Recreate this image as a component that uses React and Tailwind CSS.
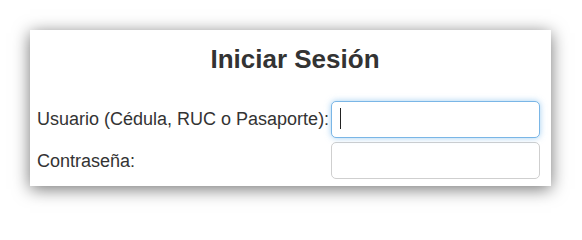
import { useState } from 'react';

export default function App() {
    const [usuario, setUsuario] = useState('');
    const [clave, setClave] = useState('');

    return (
        <div className="w-[582px] h-[218px] bg-white pt-[30px] pl-[30px] font-['Liberation_Sans',Arial,sans-serif] text-[#333]">
            <div className="w-[521px] h-[156px] bg-white shadow-[0_3px_16px_rgba(0,0,0,0.55)] pt-[14px]">
                {/* Title */}
                <h2 className="text-center text-[26px] leading-[30px] font-bold pl-[9px]">Iniciar Sesión</h2>

                {/* Form */}
                <div className="mt-[27px] pl-[7px] grid grid-cols-[294px_209px] gap-y-[4px] items-center">
                    <label className="text-[18px] leading-[21px] whitespace-nowrap">Usuario (Cédula, RUC o Pasaporte):</label>
                    <div className="relative h-[37px] rounded-[5px] border border-[#7ab6e6] shadow-[0_0_6px_rgba(102,175,233,0.6)] bg-white">
                        <input
                            type="text"
                            value={usuario}
                            onChange={(e) => setUsuario(e.target.value)}
                            className="w-full h-full bg-transparent outline-none px-2 text-[18px] caret-transparent"
                        />
                        <span className="absolute left-[8px] top-[6px] w-[1px] h-[21px] bg-[#222]" />
                    </div>

                    <label className="text-[18px] leading-[21px] whitespace-nowrap mt-[2px]">Contraseña:</label>
                    <div className="h-[37px] rounded-[5px] border border-[#cfcfcf] bg-white">
                        <input
                            type="password"
                            value={clave}
                            onChange={(e) => setClave(e.target.value)}
                            className="w-full h-full bg-transparent outline-none px-2 text-[18px]"
                        />
                    </div>
                </div>
            </div>
        </div>
    );
}
